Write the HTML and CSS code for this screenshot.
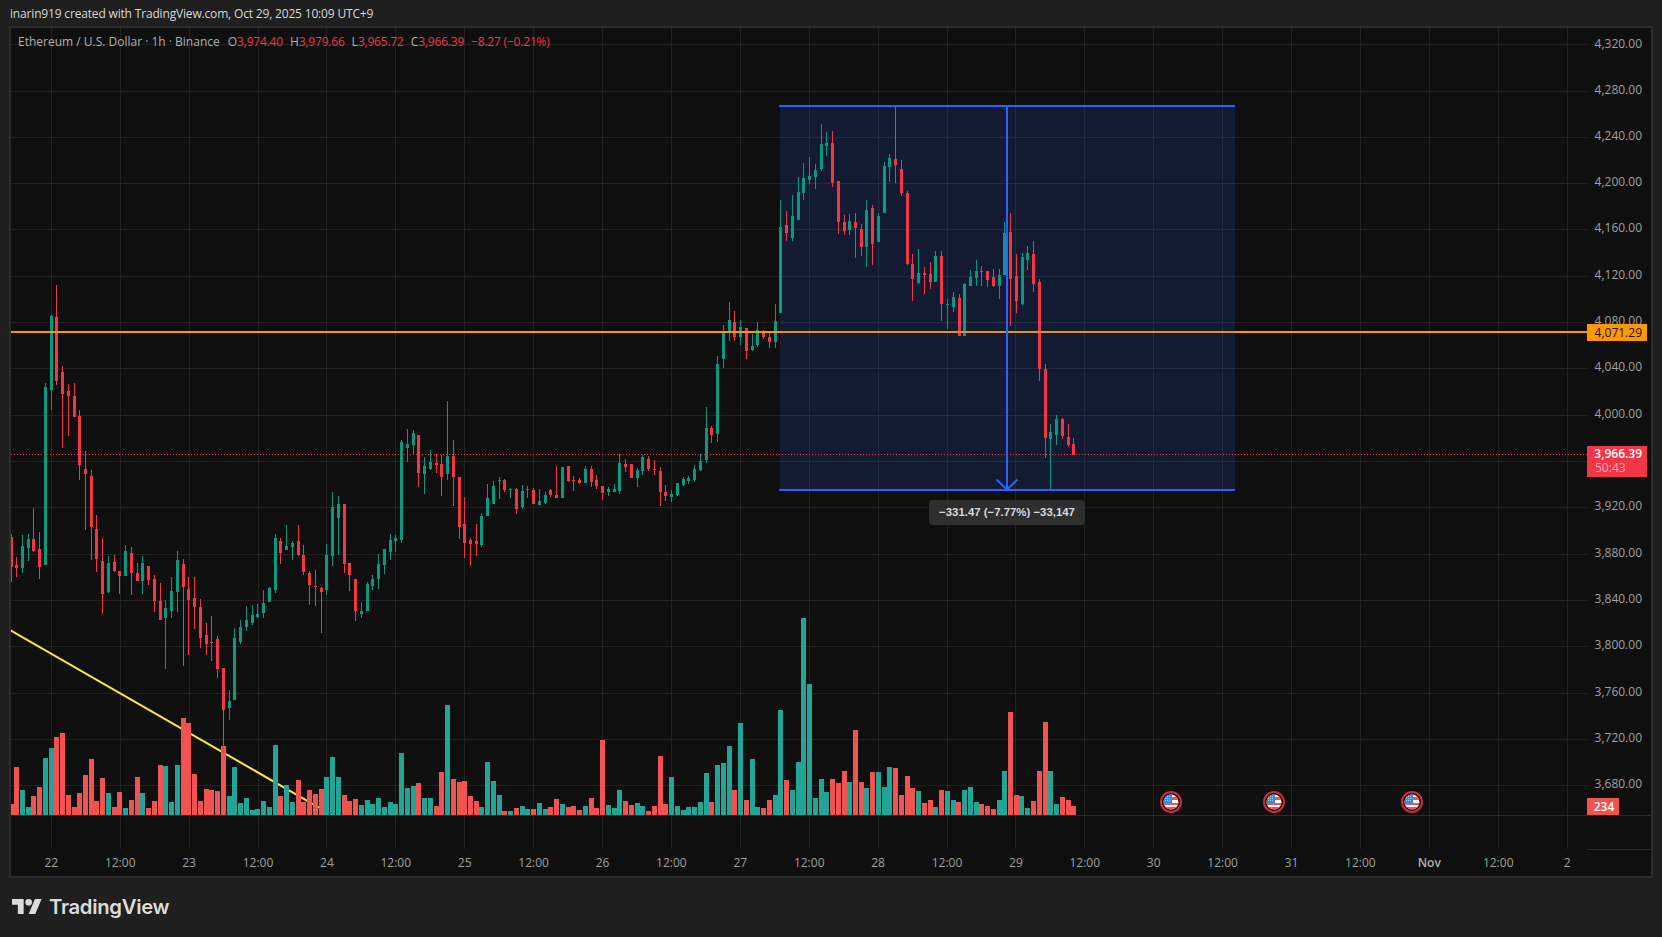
FILE: index.html
```html
<!DOCTYPE html>
<html lang="en">
<head>
<meta charset="utf-8">
<title>ETHUSD chart snapshot</title>
<link rel="stylesheet" href="styles.css">
</head>
<body>
<header class="attribution">inarin919 created with TradingView.com, Oct 29, 2025 10:09 UTC+9</header>
<main class="chart">
  <svg id="plot" class="plot" viewBox="11 28 1576 821" width="1576" height="821" aria-label="Candlestick chart"></svg>
  <svg id="prices" class="prices" viewBox="1587 28 64 848" width="64" height="848" aria-label="Price axis"></svg>
  <svg id="times" class="times" viewBox="11 849 1576 27" width="1576" height="27" aria-label="Time axis"></svg>
  <div class="legend">
    <span class="symbol">Ethereum / U.S. Dollar · 1h · Binance</span>
    <span class="ohlc">O<b>3,974.40</b></span>
    <span class="ohlc">H<b>3,979.66</b></span>
    <span class="ohlc">L<b>3,965.72</b></span>
    <span class="ohlc">C<b>3,966.39</b></span>
    <b>−8.27 (−0.21%)</b>
  </div>
  <div class="tooltip">−331.47 (−7.77%) −33,147</div>
</main>
<footer class="brand">
  <svg class="brand-icon" viewBox="0 4 36 18" width="30" height="15" aria-hidden="true"><path d="M14 22H7V11H0V4h14v18zM28 22h-8l7.5-18h8L28 22z"/><circle cx="20" cy="8" r="4"/></svg>
  <span class="brand-name">TradingView</span>
</footer>
<script src="app.js"></script>
</body>
</html>
```
FILE: styles.css
```css
* { box-sizing: border-box; }
html, body { margin: 0; padding: 0; }
body {
  width: 1662px;
  height: 937px;
  overflow: hidden;
  background: #1f1f1f;
  font-family: "Open Sans", "Liberation Sans", sans-serif;
}
.attribution {
  height: 26px;
  padding: 4px 0 0 10px;
  font-size: 12px;
  letter-spacing: -0.17px;
  line-height: 20px;
  color: #d8d8d8;
}
.chart {
  position: relative;
  width: 1644px;
  height: 852px;
  margin-left: 9px;
  border: 2px solid #2b2b2b;
  background: #0f0f0f;
  display: grid;
  grid-template-columns: 1576px 64px;
  grid-template-rows: 821px 27px;
}
.plot, .prices, .times { display: block; }
.prices { grid-column: 2; grid-row: 1 / span 2; }
.times { grid-column: 1; grid-row: 2; }
.grid { stroke: #222; stroke-width: 1; }
.sep { stroke: #2b2b2b; stroke-width: 1; }
.trend { stroke: #ffeb3b; stroke-width: 2; fill: none; }
.level { fill: #ff9800; }
.level-shaded { fill: #df9026; }
.last { stroke: #f23645; stroke-width: 1; stroke-dasharray: 1 2; }
.box { fill: rgba(41, 98, 255, .15); }
.measure { fill: #2962ff; }
.arrow { stroke: #2962ff; stroke-width: 2; fill: none; }
.up { fill: #089981; }
.down { fill: #f23645; }
.vol-up { fill: #22a596; }
.vol-down { fill: #f25350; }
.axis-text { font-size: 12px; fill: #a0a0a0; }
.axis-strong { font-weight: 600; fill: #b0b0b0; }
.tag-dark { font-size: 12px; fill: #111; }
.tag-light { font-size: 12px; fill: #fff; font-weight: 600; }
.tag-soft { font-size: 12px; fill: #ffb3ba; }
.tag-orange { fill: #ff9800; }
.tag-red { fill: #f23645; }
.tag-vol { fill: #f25350; }
.flag-ring { fill: #0f0f0f; stroke: #d42a3a; stroke-width: 2; }
.flag-white { fill: #fff; }
.flag-red { fill: #f4514f; }
.flag-blue { fill: #2f8be8; }
.flag-star { fill: #a8d0f5; }
.legend {
  position: absolute;
  left: 7px;
  top: 4px;
  display: flex;
  gap: 7px;
  font-size: 12px;
  line-height: 20px;
  color: #b0b0b0;
  white-space: nowrap;
}
.legend b { font-weight: 400; color: #f23645; letter-spacing: -0.2px; }
.symbol { margin-right: 1px; }
.tooltip {
  position: absolute;
  left: 918px;
  top: 472px;
  width: 156px;
  height: 25px;
  border-radius: 4px;
  background: #2e2e2e;
  color: #d8d8d8;
  font-family: "Liberation Sans", sans-serif;
  font-size: 11.4px;
  font-weight: 700;
  line-height: 25px;
  text-align: center;
}
.brand {
  display: flex;
  align-items: center;
  gap: 7px;
  height: 59px;
  padding: 0 0 2px 12px;
  color: #dcdcdc;
}
.brand-icon { fill: #dcdcdc; display: block; }
.brand-name {
  font-family: Inter, sans-serif;
  font-size: 20.3px;
  font-weight: 600;
  letter-spacing: -0.3px;
}
```
FILE: app.js
```js
// Candles as read off the chart: [x, up?, wickTop, bodyTop, bodyBottom, wickBottom], in 1/3 px from each origin.
var candleGroups = [
  { ox: 0, oy: 540, rows: [
    [33,0,-18,-9,80,125],[49,0,51,75,84,110],[67,1,-15,18,84,98],[85,1,-18,-3,24,63],[100,0,-96,-3,33,36],
    [118,0,-24,27,81,117],[136,1,-471,-459,75,75],[154,1,-675,-672,-450,-390],[169,0,-765,-669,-477,-465],
    [187,0,-522,-504,-438,-276],[205,0,-468,-447,-432,-312],[223,0,-471,-432,-369,-369],[238,0,-390,-372,-225,-180],
    [256,0,-267,-213,-198,-30],[274,0,-210,-192,-39,60],[289,0,-75,-33,57,95],[307,0,-6,63,162,222],
    [325,1,48,69,156,159],[343,0,45,66,93,96],[358,0,93,93,108,162],[376,1,15,33,108,108],[394,0,21,39,99,165],
    [412,0,69,99,123,123],[427,1,48,69,123,162],[445,0,78,78,120,135],[463,0,105,117,183,216],[481,0,129,183,240,240],
    [496,1,180,204,234,387],[514,1,111,153,213,234],[532,1,33,60,156,216],[550,0,57,72,141,378],[565,0,111,147,180,345],
    [583,0,111,174,201,267],[601,0,177,201,294,324],[619,0,249,285,312,345],[634,0,228,306,309,363],[652,0,288,297,387,414],
    [670,0,384,384,510,640],[688,1,450,483,504,540],[703,1,264,294,480,480],[721,1,240,261,306,312],[739,1,198,240,261,273],
    [757,1,195,225,249,255],[772,1,192,222,231,234],[790,1,150,189,219,234],[808,1,141,144,186,186],[826,1,-18,-6,150,159],
    [841,0,-6,3,39,72],[859,1,-45,18,30,30],[877,1,3,10,21,60],[895,0,-45,3,45,48],[910,0,15,45,96,105],[928,0,93,99,135,195],
    [946,0,90,138,141,198],[964,0,141,144,156,279],[979,1,12,45,150,165],[997,1,-144,-99,48,78],[1015,1,-132,-108,-66,45],
    [1033,0,-108,-108,72,99],[1048,0,69,69,105,153],[1066,0,117,117,213,243],[1084,1,186,213,222,234],[1102,1,126,132,213,213],
    [1117,1,105,117,138,150],[1135,1,42,72,117,147],[1153,1,27,27,75,102],[1171,1,-18,0,36,60],[1186,1,-15,-6,3,36]
  ]},
  { ox: 400, oy: 390, rows: [
    [4,1,150,156,450,459],[22,1,117,162,174,216],[40,1,120,129,165,192],[55,0,135,135,249,291],[73,1,201,228,252,312],
    [91,1,180,216,237,240],[109,0,193,219,225,249],[124,0,195,222,261,318],[142,1,33,198,252,270],[160,0,150,198,261,348],
    [178,0,261,261,411,447],[193,0,321,402,459,504],[211,0,444,450,462,528],[229,0,402,453,462,498],[244,1,369,378,465,471],
    [262,1,282,324,378,378],[280,1,273,288,342,342],[298,1,261,270,273,327],[313,0,267,270,300,306],[331,1,294,297,300,324],
    [349,0,294,297,357,372],[367,1,285,303,351,357],[382,1,288,297,300,324],[400,0,294,300,342,342],[418,1,297,333,345,345],
    [436,1,306,315,339,342],[451,0,297,300,315,321],[469,0,228,315,324,324],[487,1,231,231,324,324],[505,0,228,228,273,276],
    [520,0,258,270,273,303],[538,0,264,270,279,282],[556,1,228,237,279,279],[574,0,228,237,276,291],[589,0,255,270,288,297],
    [607,0,288,288,309,330],[625,1,291,297,306,318],[643,1,282,297,306,306],[658,1,193,219,303,312],[676,0,207,222,231,246],
    [694,0,222,222,264,264],[712,1,234,240,264,291],[727,1,195,201,243,255],[745,0,198,207,237,243],[763,0,210,237,240,255],
    [781,0,231,243,306,348],[796,0,285,306,318,333],[814,1,300,312,321,336],[832,1,279,279,315,318],[850,1,261,267,285,288],
    [865,1,258,264,273,282],[883,1,225,237,270,276],[901,1,193,213,240,243],[919,1,51,114,210,219],[934,0,108,114,135,159]
  ]},
  { ox: 690, oy: 230, rows: [
    [82,1,378,402,612,636],[100,1,285,306,387,414],[118,1,216,270,306,333],[133,0,243,276,321,333],[151,1,270,291,321,345],
    [169,0,294,294,363,387],[187,1,312,348,360,363],[202,1,276,300,345,351],[220,0,300,306,321,327],[238,0,303,321,336,354],
    [256,1,222,273,336,354]
  ]},
  { ox: 760, oy: 90, rows: [
    [61,1,330,411,669,669],[79,0,363,405,429,453],[97,1,315,378,444,453],[115,1,261,306,390,390],[130,1,219,264,309,330],
    [148,1,201,258,270,282],[166,1,222,240,261,297],[184,1,102,162,237,243],[199,1,126,159,168,198],[217,0,123,159,279,291],
    [235,0,273,273,396,432],[253,0,375,396,423,435],[268,1,372,393,420,435],[286,0,369,396,414,504],[304,0,402,417,471,498],
    [319,1,330,360,471,531],[337,0,345,354,462,525],[355,1,369,378,456,456],[373,1,216,228,369,369],[388,1,192,204,231,276],
    [406,0,48,207,225,279],[424,0,210,237,309,318],[442,0,303,309,522,525],[457,0,492,522,567,633],[475,1,477,549,579,582],
    [493,0,531,549,555,612],[511,0,516,552,576,597],[526,1,483,498,576,576],[544,0,483,498,642,693],[562,1,627,642,645,717],
    [580,1,606,621,651,666],[597,0,612,624,738,738],[613,1,579,582,738,738],[631,1,540,561,588,588],[649,1,510,543,564,588],
    [664,0,528,543,546,588],[682,0,543,543,570,591],[700,0,537,561,588,591],[718,1,537,555,588,627],[733,1,396,429,555,555],
    [751,0,369,426,567,708],[769,0,492,558,633,669],[787,1,489,501,642,645],[802,1,468,489,510,540],[820,0,453,492,582,606],
    [838,0,567,576,837,873]
  ]},
  { ox: 920, oy: 280, rows: [
    [376,0,252,267,474,534],[391,1,432,456,477,630],[409,1,405,417,465,495],[427,0,414,417,468,477],[445,0,432,471,495,501],
    [460,0,474,492,525,525]
  ]}
];

// Volume bars: [x, up?, top], in 1/3 px from each origin; all stand on y = 815.
var volumeGroups = [
  { ox: 0, oy: 540, rows: [
    [35,0,792],[49,0,681],[67,1,750],[84,1,801],[100,0,768],[118,0,741],[136,1,654],[153,1,624],[169,0,591],[187,0,579],
    [205,0,765],[222,0,801],[238,0,759],[256,0,705],[273,0,657],[289,0,783],[307,0,714],[325,1,759],[342,0,801],[358,0,756],
    [376,1,804],[394,0,780],[411,0,711],[427,1,759],[445,0,804],[463,0,783],[480,0,675],[496,1,678],[514,1,786],[532,1,675],
    [549,0,534],[565,0,549],[583,0,702],[601,0,783],[618,0,747],[634,0,750],[652,0,753],[670,0,618],[687,1,768],[703,1,681],
    [721,1,789],[739,1,774],[757,1,810],[772,1,807],[790,1,783],[808,1,801],[825,1,615],[841,0,768],[859,1,735],[877,1,786],
    [894,0,720],[910,0,786],[928,0,750],[946,0,762],[963,0,747],[979,1,711],[997,1,651],[1015,1,711],[1032,0,765],[1048,0,783],
    [1066,0,777],[1084,1,795],[1101,1,780],[1117,1,792],[1135,1,774],[1153,1,801],[1171,1,786],[1186,1,792]
  ]},
  { ox: 400, oy: 600, rows: [
    [4,1,459],[22,1,564],[39,1,558],[55,0,549],[73,1,594],[91,1,594],[108,0,618],[124,0,516],[142,1,315],[160,0,537],
    [177,0,546],[193,0,543],[211,0,588],[228,0,603],[244,1,621],[262,1,486],[280,1,543],[297,1,585],[313,0,633],[331,1,633],
    [349,0,624],[367,1,618],[382,1,627],[400,0,627],[418,1,609],[435,1,627],[451,0,621],[469,0,597],[487,1,612],[505,0,621],
    [520,0,618],[538,0,630],[556,1,618],[573,0,594],[589,0,624],[607,0,420],[625,1,615],[642,1,624],[658,1,570],[676,0,603],
    [694,0,615],[712,1,609],[727,1,618],[745,0,633],[763,0,618],[780,0,468],[796,0,612],[814,1,531],[832,1,618],[849,1,630],
    [865,1,621],[883,1,621],[901,1,606],[918,1,519],[934,0,606],[952,1,495],[970,1,489],[987,1,438],[1003,0,570],[1021,1,369],
    [1039,0,600],[1056,1,477],[1072,1,621],[1090,0,624],[1108,0,600],[1125,1,585],[1141,1,330],[1159,0,540],[1177,1,570],[1194,1,486]
  ]},
  { ox: 780, oy: 600, rows: [
    [70,1,54],[88,1,252],[106,1,594],[123,1,537],[139,1,576],[157,0,537],[175,0,549],[192,0,513],[208,1,546],[226,0,390],
    [243,0,546],[259,1,564],[277,0,516],[295,1,516],[312,1,561],[328,1,501],[346,0,504],[364,0,585],[381,0,528],[397,0,564],
    [415,1,573],[433,0,609],[450,0,600],[466,1,621],[484,0,570],[502,1,573],[519,1,600],[535,0,606],[553,1,570],[571,1,561],
    [588,1,606],[604,0,612],[622,0,618],[640,0,627],[657,1,600],[673,1,513],[691,0,336],[709,0,585],[725,1,588],[742,1,624],
    [760,0,603],[778,0,513],[795,0,366],[811,1,513],[829,1,612],[847,0,591],[864,0,600],[880,0,618]
  ]}
];

// 3,960 sits behind the last-price tag in the reference, so it has a grid line but no label.
var priceRows = [[4320,44.5],[4280,91],[4240,137.3],[4200,183.3],[4160,229.3],[4120,276.3],[4080,322.3],[4040,368.3],[4000,415.3],
  [3960,461.3,true],[3920,507.3],[3880,554.3],[3840,600.3],[3800,646.3],[3760,693.3],[3720,739.3],[3680,785.3]];
var timeLabels = ['22','12:00','23','12:00','24','12:00','25','12:00','26','12:00','27','12:00','28','12:00','29','12:00','30','12:00','31','12:00','Nov','12:00','2'];
var TIME_X0 = 51.3, TIME_STEP = 68.9;

function rect(x, y, w, h, cls) {
  return '<rect class="' + cls + '" x="' + x + '" y="' + y + '" width="' + w + '" height="' + h + '" shape-rendering="crispEdges"/>';
}
function hline(x1, x2, y, cls) {
  return '<line class="' + cls + '" x1="' + x1 + '" x2="' + x2 + '" y1="' + y + '" y2="' + y + '" shape-rendering="crispEdges"/>';
}
function vline(x, y1, y2, cls) {
  return '<line class="' + cls + '" x1="' + x + '" x2="' + x + '" y1="' + y1 + '" y2="' + y2 + '" shape-rendering="crispEdges"/>';
}
function text(x, y, s, cls, anchor) {
  return '<text class="' + cls + '" x="' + x + '" y="' + y + '"' + (anchor ? ' text-anchor="' + anchor + '"' : '') + '>' + s + '</text>';
}

function flag(cx, cy, id) {
  var s = '<circle class="flag-ring" cx="' + cx + '" cy="' + cy + '" r="10"/>';
  s += '<clipPath id="' + id + '"><circle cx="' + cx + '" cy="' + cy + '" r="7.5"/></clipPath><g clip-path="url(#' + id + ')">';
  s += rect(cx - 8, cy - 8, 16, 16, 'flag-white');
  s += rect(cx, cy - 5, 8, 3, 'flag-red');
  s += rect(cx - 8, cy + 1, 16, 2, 'flag-red') ;
  s += rect(cx - 8, cy + 5, 16, 3, 'flag-red');
  s += rect(cx - 8, cy - 8, 8.5, 9, 'flag-blue');
  for (var i = 0; i < 3; i++) for (var j = 0; j < 3; j++) s += rect(cx - 6 + i * 2, cy - 6 + j * 2, 1, 1, 'flag-star');
  return s + '</g>';
}

function buildPlot() {
  var s = '';
  priceRows.forEach(function (p) { s += hline(11, 1587, Math.floor(p[1]) + .5, 'grid'); });
  timeLabels.forEach(function (t, i) { s += vline(Math.floor(TIME_X0 + i * TIME_STEP) + .5, 28, 849, 'grid'); });
  s += hline(11, 1587, 815.5, 'sep');
  s += hline(11, 1587, 849, 'sep');
  s += rect(780, 106, 455, 384, 'box');
  s += '<line class="trend" x1="10" y1="630" x2="329.3" y2="813.5"/>';
  volumeGroups.forEach(function (g) {
    g.rows.forEach(function (r) {
      var x = Math.round(g.ox + r[0] / 3 - 2.5), top = Math.round(g.oy + r[2] / 3);
      s += rect(x, top, 5, 815 - top, r[1] ? 'vol-up' : 'vol-down');
    });
  });
  candleGroups.forEach(function (g) {
    g.rows.forEach(function (r) {
      var cx = Math.floor(g.ox + r[0] / 3), cls = r[1] ? 'up' : 'down';
      var y = function (v) { return Math.round(g.oy + v / 3); };
      s += rect(cx, y(r[2]), 1, Math.max(1, y(r[5]) - y(r[2])), cls);
      s += rect(cx - 1, y(r[3]), 3, Math.max(1, y(r[4]) - y(r[3])), cls);
    });
  });
  s += rect(11, 331, 769, 2, 'level') + rect(780, 331, 455, 2, 'level-shaded') + rect(1235, 331, 352, 2, 'level');
  s += hline(11, 1587, 454.5, 'last');
  s += rect(779, 105, 456, 2, 'measure');
  s += rect(779, 489, 456, 2, 'measure');
  s += rect(1006, 105, 2, 385, 'measure');
  s += '<path class="arrow" d="M996.5 479.5 L1007 489.5 L1017.5 479.5"/>';
  s += flag(1171, 802, 'f1') + flag(1274, 802, 'f2') + flag(1412, 802, 'f3');
  document.getElementById('plot').innerHTML = s;
}

function buildPrices() {
  var s = hline(1587, 1651, 815.5, 'sep') + hline(1587, 1651, 849, 'sep');
  priceRows.forEach(function (p) {
    if (p[2]) return;
    var label = (p[0] / 1000 | 0) + ',' + ('000' + (p[0] % 1000)).slice(-3) + '.00';
    s += text(1642, p[1] + 3, label, 'axis-text', 'end');
  });
  s += rect(1587, 324, 60, 17, 'tag-orange') + text(1642, 336.5, '4,071.29', 'tag-dark', 'end');
  s += rect(1587, 446, 60, 31, 'tag-red') + text(1642, 458, '3,966.39', 'tag-light', 'end') + text(1595, 472, '50:43', 'tag-soft');
  s += rect(1587, 798, 32, 17, 'tag-vol') + text(1604, 811, '234', 'tag-light', 'middle');
  document.getElementById('prices').innerHTML = s;
}

function buildTimes() {
  var s = '';
  timeLabels.forEach(function (t, i) {
    s += text(TIME_X0 + i * TIME_STEP, 867, t, t === 'Nov' ? 'axis-text axis-strong' : 'axis-text', 'middle');
  });
  document.getElementById('times').innerHTML = s;
}

buildPlot();
buildPrices();
buildTimes();
```
